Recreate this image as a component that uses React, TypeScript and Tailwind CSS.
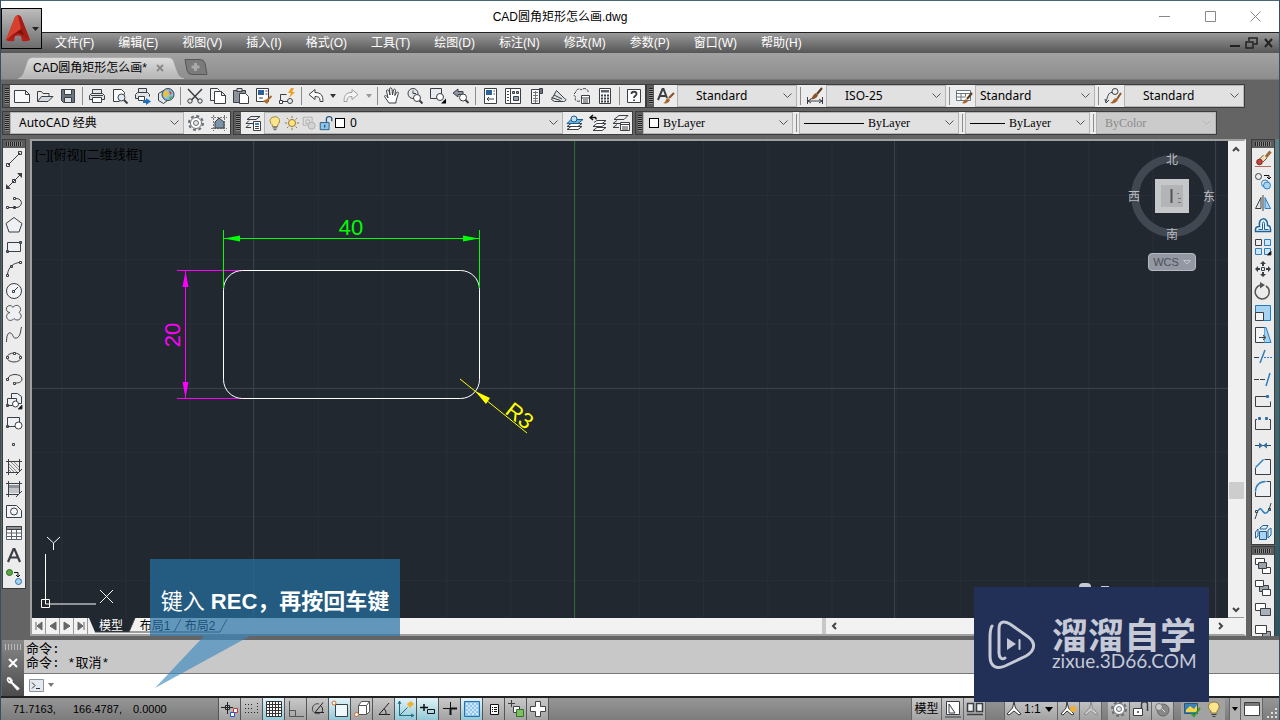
import type { ReactNode } from "react";

const ink = "#3a3f45";
const blue = "#2f6fa8";
const sky = "#a9d3f2";

/* All toolbar glyphs are drawn on an 18 x 18 board */
const glyphs: Record<string, ReactNode> = {
  new: <path d="M1.5 3.5h11l4 4v8h-15zM12.5 3.5v4h4" fill="#f8f9fa" />,
  open: (
    <>
      <path d="M1.5 14.5v-10h4l1.5 2h6v3" />
      <path d="M1.5 14.5l4-5h11.5l-5 5z" fill="#d5dade" />
    </>
  ),
  save: (
    <>
      <path d="M2.5 2.5h13v13h-11l-2-2z" fill="#6a7480" />
      <path d="M5.5 2.5h7v5h-7z" fill="#f4f4f4" />
      <path d="M5.5 10.5h7v5h-7z" fill="#dfe3e6" />
    </>
  ),
  print: (
    <>
      <path d="M4.5 6.5v-4h9v4M4.5 12.5h-3v-4l2-2h11l2 2v4h-3" fill="#dfe3e6" />
      <path d="M4.5 10.5h9v5h-9z" fill="#fff" />
      <path d="M3 8.5h12" />
    </>
  ),
  preview: (
    <>
      <path d="M8.5 14.5h-6v-12h8l3 3v2" fill="#f8f9fa" />
      <circle cx="10.5" cy="10.5" r="3.5" fill="#dfeaf2" />
      <path d="M13 13l3.5 3.5" strokeWidth="2" />
    </>
  ),
  publish: (
    <>
      <path d="M4.5 5.5v-4h8v4M4.5 11.5h-3v-4l2-2h10l2 2v2" fill="#dfe3e6" />
      <path d="M4.5 9.5h6v4h-6z" fill="#fff" />
      <path d="M9 13h3v-2l5 3.5-5 3.5v-2h-3z" fill="#1f6fc0" stroke="none" />
    </>
  ),
  globe: (
    <>
      <path d="M1.5 6.5l5-3 4 2v8l-4 3-5-3z" fill="#e2e6ea" />
      <circle cx="11" cy="7.5" r="6" fill="#7ec0ea" />
      <path d="M8 3l3 1 1 4-3 3-3-3z" fill="#e9c33c" stroke="none" />
      <path d="M12 3l3 3-2 2z" fill="#d9483b" stroke="none" />
      <path d="M12 10l4-1-3 4z" fill="#58a949" stroke="none" />
    </>
  ),
  cut: (
    <>
      <path d="M2 2l10.5 11M16 2L5.5 13" strokeWidth="1.5" />
      <circle cx="4" cy="14" r="2.2" />
      <circle cx="14" cy="14" r="2.2" />
    </>
  ),
  copy: (
    <>
      <path d="M5.5 13.5h-4v-12h7l2 2" fill="#f4f4f4" />
      <path d="M5.5 4.5h7l4 4v8h-11zM12.5 4.5v4h4" fill="#fff" />
    </>
  ),
  paste: (
    <>
      <path d="M1.5 3.5h12v12h-12z" fill="#8b9299" />
      <path d="M5 1.5h5v3h-5z" fill="#d5d8da" />
      <path d="M7.5 6.5h6l3 3v7h-9z" fill="#fff" />
    </>
  ),
  match: (
    <>
      <path d="M1.5 1.5h12v13h-12z" fill="#fff" />
      <path d="M3 3h6v5h-6z" fill="#2a639b" stroke="none" />
      <path d="M10.5 4h2M10.5 7h2M4 11h4" />
      <path d="M16.5 9l-4 4" stroke="#a86b2e" strokeWidth="2" />
      <path d="M8 14l4-2 2 2-2 3z" fill="#b06a28" stroke="none" />
    </>
  ),
  block: (
    <>
      <path d="M2.5 7.5h6M2.5 7.5v7h7" />
      <circle cx="12" cy="14" r="2.5" />
      <path d="M1.5 13.5h3v3h-3z" fill="#fff" />
      <path d="M13 1l-3 5h3l-2 5 6-6h-3l2-4z" fill="#f0a020" stroke="none" />
    </>
  ),
  undo: <path d="M2 7.5l6-5v3c6 0 8 3 8 9h-3c0-4-1-5-5-5v3z" fill="#fafafa" />,
  redo: <path d="M16 7.5l-6-5v3c-6 0-8 3-8 9h3c0-4 1-5 5-5v3z" fill="#f6f6f6" stroke="#9a9ea2" />,
  pan: (
    <path
      d="M6 16L1.5 9.5c0-1.5 2-1 3 .5l.5 1-1.5-7c0-1.5 2-1.5 2.5 0l1 4-.5-6c0-1.5 2-1.5 2.5 0l.5 6 1-5c.5-1.5 2.2-1 2 .5l-.7 5 1.7-3c1-1 2.200-.3 1.800 1L13 14v2z"
      fill="#fff"
    />
  ),
  zoomrt: (
    <>
      <circle cx="7" cy="6.5" r="5" fill="#e4e8ec" />
      <path d="M7 3.5v3h3" />
      <circle cx="11" cy="11" r="3.5" fill="#fff" />
      <path d="M13.5 13.5l3 3" strokeWidth="2" />
    </>
  ),
  zoomwin: (
    <>
      <path d="M1.5 1.5h11v10h-11z" fill="#e9ecef" />
      <circle cx="11" cy="10" r="3.5" fill="#fff" />
      <path d="M12 16.500h5v-5z" fill="#000" stroke="none" />
    </>
  ),
  zoomprev: (
    <>
      <path d="M1 6l5-4v2.5h5v3H6V10z" fill="#8d949b" />
      <circle cx="11" cy="10.5" r="3.5" fill="#fff" />
      <path d="M13.5 13l3 3" strokeWidth="2" />
    </>
  ),
  props: (
    <>
      <path d="M3.5 1.5h12v15h-12z" fill="#fff" />
      <path d="M5 3h6v5H5z" fill="#2a639b" stroke="none" />
      <path d="M12.5 4h1.5M12.5 7h1.5M6 12h7M8 10l-2 2 2 2" />
    </>
  ),
  center: (
    <>
      <path d="M1.5 1.5h15v15h-15zM6.5 1.5v15" fill="#fff" />
      <path d="M3 4.5h2M3 7.5h2M3 10.5h2M3 13.5h2" />
      <path d="M8.5 4.5h2v2h-2zM12.5 4.5h2v2h-2zM9.5 9.5h5v4h-5z" fill="#8fa3b5" />
    </>
  ),
  palette: (
    <>
      <path d="M4.5 2.5h8v14h-8z" fill="#fff" />
      <path d="M12.5 1.5h3v5h-3z" fill="#6a7480" />
      <path d="M6 5.5h5M6 8.5h5M6 11.5h5M6 14h5M8.5 4v12" stroke="#777" />
    </>
  ),
  sheets: (
    <>
      <path d="M1.5 12.5l5-9 8 8c2 0 2 3-1 3h-9z" fill="#dde1e4" />
      <path d="M1.5 10.5l9 3M4 8l8 4" />
    </>
  ),
  markup: (
    <>
      <path d="M7 14c-4 1-6-1-4-4-3-1-2-4 0-5 0-3 4-4 5-2 3-3 8-1 7 3" strokeDasharray="3 1" />
      <path d="M8.5 8.5h8v8h-8zM8.5 11h8M10 13h5M10 15h5" fill="#fff" />
    </>
  ),
  calc: (
    <>
      <path d="M3.5 1.5h11v15h-11z" fill="#fff" />
      <path d="M5 3h8v2.5H5z" fill="#59636d" stroke="none" />
      <path d="M5 8.5h8M5 11.5h8M5 14.5h8" strokeDasharray="2 1" strokeWidth="2" />
    </>
  ),
  help: (
    <>
      <path d="M2.5 2.5h13v13h-13z" fill="#fff" />
      <path d="M6.5 7c0-3 5-3 5 0 0 2-2.5 1.5-2.5 4M9 12.500v1.5" strokeWidth="1.8" />
    </>
  ),
  textstyle: (
    <>
      <path d="M1 13L5.5 2h1L10 11M3 9h6" strokeWidth="2" />
      <path d="M17 6l-5 5" stroke="#8a5428" strokeWidth="2.2" />
      <path d="M6 16c3 0 2-4 5-5l2 2c-1 3-4 4-7 3z" fill="#a8652e" stroke="none" />
    </>
  ),
  dimstyle: (
    <>
      <path d="M1.500 10v7M16.5 10v7M2 14h14M5 12l-3 2 3 2M13 12l3 2-3 2" />
      <path d="M16 1l-5 6" stroke="#5b3a20" strokeWidth="2" />
      <path d="M4 12c3-1 2-4 6-6l2 2c-1 3-4 5-8 4z" fill="#8a5428" stroke="none" />
    </>
  ),
  tablestyle: (
    <>
      <path d="M1.5 3.5h14v10h-14zM1.5 6.5h14M1.5 10h9M6 6.5v7M10.5 6.5v3" fill="#fff" stroke="#6a7480" />
      <path d="M17 6l-5 6" stroke="#5b3a20" strokeWidth="2" />
      <path d="M7 16c2-1 2-3 4-4l2 2c-1 2-4 3-6 2z" fill="#a8652e" stroke="none" />
    </>
  ),
  leader: (
    <>
      <circle cx="11" cy="4.5" r="3" />
      <path d="M8 5.5c-4 0-4 4-6 9M1 12l1 4 3-3" />
      <path d="M17 6l-4 6" stroke="#8a5428" strokeWidth="2" />
      <path d="M6 16c3-1 3-4 6-5l2 2c-2 3-5 4-8 3z" fill="#a8652e" stroke="none" />
    </>
  ),
  gear: (
    <>
      <circle cx="9" cy="9" r="7" strokeDasharray="3 2.5" strokeWidth="2" stroke="#6a7076" />
      <circle cx="9" cy="9" r="5.5" fill="#fff" stroke="#6a7076" />
      <circle cx="9" cy="9" r="2.5" fill="#e6e6e6" stroke="#6a7076" />
    </>
  ),
  house: (
    <>
      <path d="M1 3.5h16M1 14.5h16M3.5 1v16M14.5 1v16" stroke="#777" strokeDasharray="2 1" />
      <path d="M5 14V8l4-4 5 4v6z" fill="#7d93a8" />
    </>
  ),
  layers: (
    <>
      <path d="M3 5.5l4-3h9l-4 3zM2 9.5l3-3M2 9.5h7M2 13.5l3-3M2 13.5h5" />
      <path d="M9.5 7.5h7v9h-7zM11 12.5h4M11 14.5h4" fill="#fff" />
      <path d="M11 9h4v2h-4z" fill="#3e83c0" stroke="none" />
    </>
  ),
  bulb: (
    <>
      <path d="M6 11c-5-4-2-9 3-9s7 5 3 9v2H6z" fill="#ffe58a" stroke="#8a7a3c" />
      <path d="M6.5 14.5h5M7.5 16.5h3" />
    </>
  ),
  sun: (
    <>
      <circle cx="9" cy="9" r="4" fill="#ffe07a" stroke="#8a7030" />
      <path d="M9 1v2.5M9 14.5V17M1 9h2.5M14.5 9H17M3.3 3.3L5 5M13 13l1.7 1.7M14.7 3.3L13 5M5 13l-1.7 1.7" stroke="#8a7030" />
    </>
  ),
  vpfreeze: (
    <>
      <path d="M2.5 2.5h10v5M2.5 2.5v9h5M5.5 5.5h4v4h-4z" stroke="#aaa" />
      <circle cx="12" cy="12" r="4" fill="#d3d3d3" stroke="#aaa" />
    </>
  ),
  unlock: (
    <>
      <path d="M2.5 8.5h10v8h-10z" fill="#8ec5ea" stroke="#24577f" />
      <path d="M9.5 8V4c0-3 6-3 6 0v3M7.500 11v3" stroke="#24577f" strokeWidth="1.5" />
    </>
  ),
  stackA: (
    <>
      <path d="M1 15.5l4-3h11l-4 3zM1 12.5l4-3h11l-4 3z" fill="#fff" />
      <path d="M1 9.5l4-4h12l-5 4z" fill="#6cb6e4" stroke="#1f5c8c" />
      <circle cx="8" cy="5" r="3" fill="#bfe0f5" stroke="#1f5c8c" />
    </>
  ),
  stackB: (
    <>
      <path d="M4 16.5l4-3h9l-4 3zM4 12.5l4-3h9l-4 3zM5 8.5l3-2h9l-4 3" fill="#fff" />
      <path d="M1 3.5h6M4 1L1 3.5 4 6M7 3.5v2" stroke="#111" strokeWidth="1.4" />
    </>
  ),
  stackC: (
    <>
      <path d="M2 5.5l5-4h9l-4 4zM1 9.5l4-3M1 9.5h7M1 13.5l4-3M1 13.5h6" />
      <path d="M8.5 8.5h9v8h-9zM8.5 10.5h9M10 13h6M10 15h6" fill="#fff" />
    </>
  ),
  line: <path d="M3 15L15 3M1.5 13.5h3v3h-3zM13.5 1.5h3v3h-3z" />,
  xline: (
    <>
      <path d="M2 16L16 2M7.5 7.5h3v3h-3z" />
      <path d="M1 17v-5l5 5zM17 1v5l-5-5z" fill={ink} stroke="none" />
    </>
  ),
  pline: <path d="M4 13.500h8c6-1 6-9-1-9M1.500 12.500h2v2h-2zM8.500 12.500h2v2h-2zM8.500 3.500h2v2h-2z" fill="none" />,
  polygon: <path d="M9 1.5l8 6-3 8.5H4L1 7.5z" fill="#eef1f3" />,
  rect: <path d="M2.5 4.5h13v9h-13zM1.5 12.5h2v2h-2zM14.5 3.5h2v2h-2z" fill="#eef1f3" />,
  arc: <path d="M2.5 14c1-7 6-11 12-11.500M1.500 14.500h2v2h-2zM5.500 5.500h2v2h-2zM14.500 1.500h2v2h-2z" />,
  circle: (
    <>
      <circle cx="9" cy="9" r="7.5" fill="#f2f4f5" />
      <path d="M9 9l4-4M7.5 8.5h2v2h-2z" />
    </>
  ),
  cloud: (
    <path
      d="M8 3.500a4 4 0 1 1 6 5a4 4 0 1 1-5 6a4 4 0 1 1-4-6a3.500 3.500 0 1 1 3-5z"
      fill="#eef1f3"
      stroke="#555"
    />
  ),
  spline: <path d="M1.500 16c0-5 1-10 4-9s2 6 6 5 4-7 5-11" />,
  ellipse: (
    <>
      <ellipse cx="9" cy="9.500" rx="7" ry="4.500" />
      <path d="M1.500 8.500h2v2h-2zM14.500 8.500h2v2h-2zM8.500 4.500h2v2h-2z" fill="#fff" />
    </>
  ),
  earc: <path d="M3 9c0-6 14-6 14 0 0 3-3 4-6 4M1.500 8.500h2v2h-2zM8.500 12.500h2v2h-2z" />,
  insert: (
    <>
      <path d="M6.5 6V1.5h6l4 3v7h-4M2.5 13.5v-7h9v7zM1.500 12.5h2v2h-2z" fill="#eef1f3" />
      <circle cx="10.5" cy="12" r="3" fill="#fff" />
      <path d="M17 17h-4l4-4z" fill="#000" />
    </>
  ),
  makeblock: (
    <>
      <path d="M2.5 12.5v-9h12v9zM1.500 11.5h2v2h-2z" fill="#eef1f3" />
      <circle cx="13.5" cy="11.5" r="3.5" fill="#fff" />
    </>
  ),
  point: <path d="M7.5 7.5h2v2h-2z" />,
  hatch: (
    <>
      <path d="M4 6l8 8M4 9l5 5M4 12l2 2M6 4l8 8M9 4l5 5" stroke="#888" />
      <path d="M1 3.5h16M1 14.5h12M3.5 1v16M14.5 1v12M17 11l-6 6" />
    </>
  ),
  gradient: (
    <>
      <path d="M4 5h10v3H4z" fill="#8d9399" stroke="none" />
      <path d="M4 8h10v5H4z" fill="#c2c6ca" stroke="none" />
      <path d="M1 3.5h16M1 14.5h12M3.5 1v16M14.5 1v12M17 11l-6 6" />
    </>
  ),
  region: (
    <>
      <path d="M1.5 15.5v-12h10l5 5v7z" fill="#f2f4f5" />
      <circle cx="9" cy="9.5" r="3.5" />
    </>
  ),
  table: (
    <>
      <path d="M1.5 2.5h15v13h-15zM1.5 9h15M1.5 12.5h15M6.5 5v10.5M11.5 5v10.5" fill="#fff" stroke="#5c636a" />
      <path d="M1.5 2.5h15v3h-15z" fill="#8d9399" />
    </>
  ),
  text: <path d="M3 16L8.5 3h1L15 16M5 11.5h8" strokeWidth="2.2" />,
  addsel: (
    <>
      <circle cx="4.5" cy="4.5" r="3" fill="#5aa93f" stroke="#2c6b1c" />
      <circle cx="13.5" cy="13.5" r="3" fill="#a6d4f5" stroke={blue} />
      <path d="M9 4.5h4v4M11 7l2 2 2-2" stroke="#111" />
    </>
  ),
  erase: (
    <>
      <path d="M16.500 1.500l-5 6" stroke="#9a6a35" strokeWidth="3" />
      <path d="M11.500 6.500l-4 4" stroke="#f0dfb4" strokeWidth="5" />
      <path d="M13 8l-4 4M9.500 5l-4 4" stroke="#6b5532" />
      <circle cx="5.5" cy="12" r="2.8" fill="#c8423c" stroke="#7d2723" />
      <path d="M1 16.500h16" stroke="#b56a5e" />
    </>
  ),
  copyobj: (
    <>
      <circle cx="4.5" cy="4.5" r="3" />
      <path d="M10 3.5h5v3M13 5l2 2 2-2" stroke="#111" />
      <circle cx="11" cy="11.5" r="3.5" stroke="#2c7fc0" />
      <circle cx="13" cy="13.5" r="3.5" stroke="#2c7fc0" fill={sky} />
    </>
  ),
  mirror: (
    <>
      <path d="M7 3.5v11H1.5z" fill="#e4e6e8" />
      <path d="M11 3.5v11h5.5z" fill={sky} stroke="#2c7fc0" />
      <path d="M9 1v16" />
    </>
  ),
  offset: (
    <>
      <path d="M1.500 15.500v-2c0-3 2-3 4-3-2-10 9-10 8-1 2 0 3 1 3 4v2z" fill="#e4f1fb" stroke="#1f6096" strokeWidth="1.5" />
      <path d="M4.500 13.500h4v-6c0-2 2-2 2 0v6h4" stroke="#1f6096" />
    </>
  ),
  array: (
    <>
      <path d="M1.5 1.5h6v6h-6z" />
      <path d="M10.5 1.5h6v6h-6zM1.5 10.5h6v6h-6zM10.5 10.5h6v6h-6z" fill="#cfe6f8" stroke="#2c7fc0" />
      <path d="M17 17h-4l4-4z" fill="#000" />
    </>
  ),
  move: (
    <>
      <path d="M7.5 7.5h3v3h-3z" />
      <path d="M9 1l3 3H6zM9 17l3-3H6zM1 9l3-3v6zM17 9l-3-3v6zM8 4h2v2H8zM8 12h2v2H8zM4 8h2v2H4zM12 8h2v2h-2z" fill={ink} stroke="none" />
    </>
  ),
  rotate: (
    <>
      <path d="M12 4a7 7 0 1 1-5-1" stroke="#555" strokeWidth="1.5" />
      <path d="M6 0l5 3-5 3.5z" fill="#555" stroke="none" />
    </>
  ),
  scale: (
    <>
      <path d="M1.5 1.5h15v15h-15z" fill={sky} stroke="#1f7cc0" />
      <path d="M1.5 8.5h8v8h-8z" fill="#f4f4f4" />
    </>
  ),
  stretch: (
    <>
      <path d="M10 1.5h2l5 15h-7z" fill={sky} stroke="#1f7cc0" />
      <path d="M10 1.5H1.5v15H10M5 11.5h6M9 9l3 2.5L9 14" fill="#f4f4f4" />
    </>
  ),
  trim: (
    <>
      <path d="M0 9.5h5" />
      <path d="M6 15l5-13" stroke="#2c7fc0" strokeWidth="1.5" />
      <path d="M10 9.5h8" stroke="#2c7fc0" strokeDasharray="2 1" />
    </>
  ),
  extend: (
    <>
      <path d="M0 9.5h5M6 9.5h5" />
      <path d="M12 16l4-13" stroke="#2c7fc0" strokeWidth="1.5" />
    </>
  ),
  breakpt: (
    <>
      <path d="M12 4.5H1.5v10h15v-5" />
      <path d="M12.500 3.500h2v2h-2z" fill={blue} stroke={blue} />
    </>
  ),
  breaktwo: (
    <>
      <path d="M3 5.5H1.5v10h15v-10H15" />
      <path d="M4.500 3.500h2v2h-2zM11.500 3.500h2v2h-2z" fill={blue} stroke={blue} />
    </>
  ),
  join: (
    <>
      <path d="M1 9.5h16" />
      <path d="M5 6.500l4 3-4 3zM13 6.500l-4 3 4 3z" fill={blue} stroke="none" />
    </>
  ),
  chamfer: (
    <>
      <path d="M10.5 1.5h6v15h-15V10" fill="#eef1f3" />
      <path d="M1.5 9.5l8-8" stroke="#2c7fc0" strokeWidth="1.5" />
    </>
  ),
  fillet: (
    <>
      <path d="M12.5 1.5h4v15h-15V12" fill="#eef1f3" />
      <path d="M1.5 11.5c0-6 4-10 10-10" stroke="#2c7fc0" strokeWidth="1.5" />
    </>
  ),
  blend: (
    <>
      <path d="M1 17c1-3 2-5 2-7M15 8l2-7M1.5 8.500h2v2h-2zM14.500 6.500h2v2h-2z" />
      <path d="M4 9c4-8 5 9 11-1" stroke="#2c7fc0" strokeWidth="1.5" />
    </>
  ),
  explode: (
    <>
      <path d="M5.5 7.5h7v8h-7z" fill={sky} stroke="#1f6096" />
      <path d="M4 5l-2.500 3v6L4 12zM6 4l3-2.500h5L12 5H6zM14 6l3-2v7l-3 3z" fill="#e4f1fb" stroke="#1f6096" />
    </>
  ),
  order1: (
    <>
      <path d="M1.5 1.5h9v6h-9zM8.5 10.5h8v6h-8z" fill="#fff" />
      <path d="M4.5 5.5h8v6h-8z" fill="#9aa2a9" />
    </>
  ),
  order2: (
    <>
      <path d="M5.5 6.5h9v6h-9z" fill="#9aa2a9" />
      <path d="M1.5 1.5h8v6h-8zM8.5 10.5h8v6h-8z" fill="#fff" />
    </>
  ),
  order3: (
    <>
      <path d="M1.5 2.5h10v7h-10z" fill="#fff" />
      <path d="M6.5 7.5h10v7h-10z" fill="#aab1b8" />
    </>
  ),
  order4: (
    <>
      <path d="M8.5 8.5h8v7h-8z" fill="#9aa2a9" />
      <path d="M1.5 2.5h11v8h-11z" fill="#fff" />
    </>
  ),
  infer: (
    <>
      <path d="M0 7.500h12M6.500 2v12M4.500 5.500h4v4h-4z" stroke="#222" />
      <path d="M12.500 8.500h4v4h-4z" stroke="#c33" fill="#fff" />
      <path d="M9.500 12.500h4v4h-4z" stroke="#25c" fill="#fff" />
    </>
  ),
  snap: <path d="M2 4.500h9M2 8.500h9M2 12.500h11M14.500 3v10" stroke="#222" strokeDasharray="1 2" />,
  grid: (
    <path
      d="M1.5 1.5h15v15h-15zM4.5 1.5v15M7.5 1.5v15M10.5 1.5v15M13.5 1.5v15M1.5 4.5h15M1.5 7.5h15M1.5 10.5h15M1.5 13.5h15"
      fill="#fff"
      stroke="#333"
    />
  ),
  ortho: <path d="M2.5 1v15.5H17M2.5 10.5h6v6" stroke="#555" />,
  polar: (
    <>
      <path d="M15 12.5H6l8-10M12 6c2 2 2 4 1 6" stroke="#222" />
      <path d="M10 4a5 5 0 1 0 1 9" stroke="#444" />
    </>
  ),
  osnap: (
    <>
      <path d="M4.5 4.5h12v12h-12z" fill="#eef7fb" />
      <circle cx="3" cy="3" r="2" fill="#fff" stroke="#d9662c" />
    </>
  ),
  osnap3: (
    <>
      <path d="M5.5 5.5l3-4h8v10l-3 3h-8zM5.5 5.5h8v9M13.5 5.5l3-4" fill="#fff" stroke="#555" />
      <circle cx="3.5" cy="14.5" r="2" fill="#fff" stroke="#d9662c" />
    </>
  ),
  otrack: <path d="M14 3L4 14.5h11M9 9c2 1 2 3 2 5" stroke="#222" />,
  ducs: (
    <>
      <path d="M2.5 2v13.5H16M2.5 15.5l8-8M1 4l1.5-3L4 4M14 14l3 1.5-3 1.5" stroke="#1f6c80" />
      <path d="M10 4l4-3 3 3-4 4z" fill="#f0b030" stroke="none" />
    </>
  ),
  dyn: (
    <>
      <path d="M1 7.5h8M5 4v7" stroke="#111" strokeWidth="1.5" />
      <path d="M8.5 9.5h7v4h-7z" stroke="#111" />
    </>
  ),
  lwt: (
    <>
      <path d="M2 8.500h7M9.500 2v6" stroke="#111" />
      <path d="M9.500 8v7M9 8.500h7" stroke="#111" strokeWidth="2" />
    </>
  ),
  tpy: (
    <>
      <path d="M1.5 1.5h15v15h-15z" fill="#8fc6ee" stroke="#2c6ea6" />
      <path d="M4 3v12M8 3v12M12 3v12" stroke="#d0e8fa" strokeWidth="2" strokeDasharray="2 2" />
      <path d="M6 5v10M10 5v10M14 5v10" stroke="#d0e8fa" strokeWidth="2" strokeDasharray="2 2" />
    </>
  ),
  qp: (
    <>
      <path d="M5.5 4.5h8v10h-8z" fill="#fff" stroke="#111" />
      <path d="M7 7.5h5M7 9.5h5M7 11.5h5" stroke="#111" strokeDasharray="1 1 4" />
    </>
  ),
  cycle: (
    <>
      <path d="M1 3.5h7M4.5 0v7" />
      <path d="M6.5 6.5h6v6h-6z" fill="#fff" />
      <path d="M9.5 9.5h7v7h-7z" fill="#7cc05f" stroke="#39702a" />
    </>
  ),
  plus: <path d="M6.5 1.5h5v5h5v5h-5v5h-5v-5h-5v-5h5z" fill="#fff" stroke="#444" />,
  layout: (
    <>
      <path d="M2.5 1.5h13v13h-13zM1 17h16" fill="#fff" />
      <path d="M5 4l6 9H5z" />
    </>
  ),
  views: <path d="M1.5 3.5h6v8h-6zM10.5 3.5h6v8h-6zM1 14.5h16" fill="#eee" strokeWidth="1.5" />,
  anno: <path d="M9 2l1.5 6 5.5 6-2 1-5-4-5 4-2-1 5.5-6z" fill="#fff" stroke="#333" />,
  annovis: (
    <>
      <path d="M7 2l1.5 6 5.5 6-2 1-5-4-4 4-2-1L6 8z" fill="#fff" stroke="#333" />
      <circle cx="13" cy="9" r="3" fill="#f0b030" stroke="none" />
    </>
  ),
  annoauto: (
    <>
      <path d="M9 2l1.5 6 5.5 6-2 1-5-4-5 4-2-1 5.5-6z" fill="#ccc" stroke="#888" />
      <path d="M12 2l-4 6h3l-2 5" stroke="#aaa" />
    </>
  ),
  padlock: (
    <>
      <path d="M1.5 8.5h9v7h-9z" fill="#fff" />
      <path d="M9.5 8V4c0-3 6-3 6 0v7M6 11v2" strokeWidth="1.5" />
    </>
  ),
  hardware: (
    <>
      <circle cx="9" cy="10" r="6" fill="#888" stroke="#666" />
      <circle cx="5" cy="7" r="3.5" fill="#ccc" stroke="#777" />
      <path d="M8 9l3 3" stroke="#ddd" />
    </>
  ),
  tray: (
    <>
      <path d="M1.5 3.5h13v10h-13z" fill="#3b80b8" stroke="#2a567c" />
      <path d="M3 10l4-4 4 3 3-4v7H3z" fill="#f3d548" stroke="none" />
      <path d="M8 13l3 3 6-8" stroke="#35982c" strokeWidth="2" />
    </>
  ),
  clean: (
    <>
      <path d="M1.5 2.5h15v13h-15z" fill="#fff" />
      <path d="M2 3h14v3H2z" fill="#777" stroke="none" />
    </>
  ),
  wrench: <path d="M3 2a4 4 0 0 0 4 6l7 8 2-2-8-7a4 4 0 0 0-5-5l3 3-2 2z" fill="#fff" stroke="#fff" />,
};

function Glyph({ name, className = "size-[18px]" }: { name: string; className?: string }) {
  return (
    <svg viewBox="0 0 18 18" className={`shrink-0 ${className}`} fill="none" stroke={ink} strokeWidth="1" aria-hidden="true">
      {glyphs[name]}
    </svg>
  );
}

function ToolButton({ name, className = "w-[23px] h-full" }: { name: string; className?: string }) {
  return (
    <button type="button" aria-label={name} className={`flex shrink-0 items-center justify-center hover:bg-sky-100 ${className}`}>
      <Glyph name={name} />
    </button>
  );
}

function Grip() {
  return (
    <span className="flex w-[7px] shrink-0 items-center justify-center self-stretch bg-[#5c5c5c]">
      <span className="h-4 w-1 bg-[repeating-linear-gradient(#222_0_1px,#8a8a8a_1px_2px)]" />
    </span>
  );
}

function Separator() {
  return (
    <span className="flex w-[6px] shrink-0 items-center justify-center">
      <span className="h-[18px] w-px bg-[#8c8c8c]" />
    </span>
  );
}

function Toolbar({ children }: { children: ReactNode }) {
  return <div className="flex h-6 shrink-0 items-stretch border border-[#3c3c3c] bg-[#ececec]">{children}</div>;
}

interface ComboProps {
  readonly label: string;
  readonly value: string;
  readonly className: string;
  readonly prefix?: ReactNode;
  readonly disabled?: boolean;
}

function Combo({ label, value, className, prefix, disabled }: ComboProps) {
  return (
    <span className={`flex shrink-0 items-center border border-[#b4b4b4] ${disabled ? "bg-[#cbcbcb] text-[#8a8a8a]" : "bg-[#e1e1e1] text-black"} ${className}`}>
      {prefix}
      <select aria-label={label} disabled={disabled} className="min-w-0 flex-1 appearance-none bg-transparent outline-none">
        <option>{value}</option>
      </select>
      <svg viewBox="0 0 9 6" className="mr-1 h-[6px] w-[9px] shrink-0" fill="none" stroke={disabled ? "#b4b4b4" : "#555"} aria-hidden="true">
        <path d="M.5.5l4 4 4-4" />
      </svg>
    </span>
  );
}

function DropArrow({ dim = false }: { dim?: boolean }) {
  return (
    <button type="button" aria-label="More" className="flex w-[10px] shrink-0 items-center justify-center">
      <svg viewBox="0 0 6 4" className="h-1 w-[6px]" aria-hidden="true">
        <path d="M0 0h6L3 4z" fill={dim ? "#999" : "#333"} />
      </svg>
    </button>
  );
}

const menus = ["文件(F)", "编辑(E)", "视图(V)", "插入(I)", "格式(O)", "工具(T)", "绘图(D)", "标注(N)", "修改(M)", "参数(P)", "窗口(W)", "帮助(H)"];

function Header() {
  return (
    <header className="relative shrink-0">
      <div className="flex h-8 items-center border-t border-[#4a6670] bg-white">
        <h1 className="flex-1 pl-[80px] pr-[120px] text-center text-xs text-black">CAD圆角矩形怎么画.dwg</h1>
        <div className="flex w-[120px] items-center justify-between pr-[18px] text-[#888]">
          <button type="button" aria-label="Minimize">
            <svg viewBox="0 0 11 11" className="size-[11px]" stroke="currentColor"><path d="M0 5.5h11" /></svg>
          </button>
          <button type="button" aria-label="Maximize">
            <svg viewBox="0 0 11 11" className="size-[11px]" fill="none" stroke="currentColor"><path d="M.5.5h10v10H.5z" /></svg>
          </button>
          <button type="button" aria-label="Close">
            <svg viewBox="0 0 11 11" className="size-[11px]" stroke="currentColor"><path d="M.5.5l10 10M10.5.5l-10 10" /></svg>
          </button>
        </div>
      </div>
      <nav className="flex h-[21px] items-center gap-6 border-t border-[#222] bg-linear-to-b from-[#9a9a9a] to-[#565656] pl-[54px] text-xs text-white">
        {menus.map((menu) => (
          <button key={menu} type="button" className="shrink-0 leading-5">{menu}</button>
        ))}
        <span className="ml-auto flex items-center pr-1 text-[#222]">
          <svg viewBox="0 0 46 12" className="h-3 w-[46px]" fill="none" stroke="currentColor" strokeWidth="2" role="img" aria-label="Document window controls">
            <path d="M1 9h10M36 2l7 8M43 2l-7 8" />
            <path d="M17 5h7v6h-7zM20 4V1h8v6h-3" strokeWidth="1.5" />
          </svg>
        </span>
      </nav>
      <button type="button" aria-label="Application menu" className="absolute left-0 top-2 flex h-[41px] w-[41px] items-center gap-[2px] border border-black bg-linear-to-b from-[#bdbdbd] to-[#6e6e6e] pl-1">
        <svg viewBox="0 0 24 28" className="h-7 w-6 shrink-0" aria-hidden="true">
          <path d="M0 25L9 2q3-3 6 0l9 23q-3 2-8 1l-1-5q-3-1-6 0l-1 5q-5 1-8-1z" fill="#b3201a" />
          <path d="M12 0q2 0 3 2l9 23-7-3-5-7z" fill="#a61c17" />
          <path d="M12 0l3 14-8 5-7 6L9 2q1-2 3-2z" fill="#d8402e" />
          <path d="M15 14l3 6-6-2-9 6z" fill="#7c120e" />
        </svg>
        <svg viewBox="0 0 7 4" className="h-1 w-[7px]" aria-hidden="true"><path d="M0 0h7L3.5 4z" fill="#222" /></svg>
      </button>
    </header>
  );
}

function FileTabs() {
  return (
    <div className="flex h-[27px] shrink-0 items-end border-b border-[#7a7a7a] bg-linear-to-b from-[#a2a2a2] to-[#8d8d8d] pl-[17px]">
      <div className="relative flex h-[22px] w-[166px] items-center">
        <svg viewBox="0 0 166 22" className="absolute inset-0 size-full" aria-hidden="true">
          <defs>
            <linearGradient id="tab" x2="0" y2="1">
              <stop stopColor="#dcdcdc" />
              <stop offset="1" stopColor="#b5b5b5" />
            </linearGradient>
          </defs>
          <path d="M0 22q4-1 6-6l4-12q1-3 4-3h136q4 0 5 3l4 12q2 5 7 6z" fill="url(#tab)" stroke="#d5d5d5" strokeWidth=".5" />
        </svg>
        <button type="button" className="relative pl-[15px] text-xs leading-5 text-black">CAD圆角矩形怎么画*</button>
        <button type="button" aria-label="Close tab" className="relative ml-[9px]">
          <svg viewBox="0 0 8 8" className="size-2" stroke="#8a8a8a" strokeWidth="2"><path d="M1 1l6 6M7 1L1 7" /></svg>
        </button>
      </div>
      <button type="button" aria-label="New tab" className="mb-1">
        <svg viewBox="0 0 24 16" className="h-4 w-6" fill="none" aria-hidden="true">
          <path d="M1 .5h15q4 0 5 4l2 11H8q-4 0-5-4z" fill="#7b7b7b" stroke="#555" />
          <path d="M11.5 4v8M7.5 8h8" stroke="#aaa" strokeWidth="3" />
        </svg>
      </button>
    </div>
  );
}

const standardTools = [
  ["new", "open", "save"],
  ["print", "preview", "publish", "globe"],
  ["cut", "copy", "paste", "match", "block"],
];

function Toolbars() {
  return (
    <div className="flex shrink-0 flex-col gap-[3px] bg-[#646464] py-1 pl-px">
      <div className="flex font-['Noto_Sans'] text-xs">
        <Toolbar>
          <Grip />
          {standardTools.map((group) => (
            <div key={group[0]} className="flex">
              {group.map((name) => <ToolButton key={name} name={name} />)}
              <Separator />
            </div>
          ))}
          <ToolButton name="undo" className="w-6" />
          <DropArrow />
          <ToolButton name="redo" className="w-[26px]" />
          <DropArrow dim />
          <Separator />
          {["pan", "zoomrt", "zoomwin", "zoomprev"].map((name) => <ToolButton key={name} name={name} />)}
          <Separator />
          {["props", "center", "palette", "sheets", "markup", "calc"].map((name) => <ToolButton key={name} name={name} />)}
          <Separator />
          <ToolButton name="help" />
        </Toolbar>
        <Toolbar>
          <Grip />
          <ToolButton name="textstyle" />
          <Combo label="Text style" value="Standard" className="w-[120px] pl-[18px]" />
          <Separator />
          <ToolButton name="dimstyle" />
          <Combo label="Dimension style" value="ISO-25" className="w-[120px] pl-[18px]" />
          <Separator />
          <ToolButton name="tablestyle" />
          <Combo label="Table style" value="Standard" className="w-[120px] pl-1" />
          <Separator />
          <ToolButton name="leader" />
          <Combo label="Multileader style" value="Standard" className="w-[120px] pl-[18px]" />
        </Toolbar>
      </div>
      <div className="flex gap-[2px]">
        <Toolbar>
          <Grip />
          <Combo label="Workspace" value="AutoCAD 经典" className="w-[174px] pl-2 font-['Noto_Sans','Noto_Sans_CJK_SC',sans-serif] text-xs" />
          <ToolButton name="gear" />
          <ToolButton name="house" />
        </Toolbar>
        <Toolbar>
          <Grip />
          <ToolButton name="layers" />
          <Combo
            label="Layer"
            value="0"
            className="w-[299px] gap-px pl-[2px] font-['Noto_Sans'] text-xs"
            prefix={
              <>
                {["bulb", "sun", "vpfreeze", "unlock"].map((name) => <Glyph key={name} name={name} className="size-4" />)}
                <span className="mr-1 size-[10px] border border-black bg-white" />
              </>
            }
          />
          <ToolButton name="stackA" />
          <ToolButton name="stackB" />
          <ToolButton name="stackC" />
        </Toolbar>
        <div className="flex font-['Liberation_Serif',serif] text-xs">
          <Toolbar>
            <Grip />
            <Combo
              label="Color"
              value="ByLayer"
              className="w-[150px] gap-1 pl-[5px]"
              prefix={<span className="size-[10px] border border-black bg-white" />}
            />
            <Separator />
            <Combo
              label="Linetype"
              value="ByLayer"
              className="w-[160px] gap-1 pl-1"
              prefix={<span className="h-px w-[60px] bg-black" />}
            />
            <Separator />
            <Combo
              label="Lineweight"
              value="ByLayer"
              className="w-[125px] gap-1 pl-1"
              prefix={<span className="h-px w-[35px] bg-black" />}
            />
            <Separator />
            <Combo label="Plot style" value="ByColor" className="w-[120px] pl-2" disabled />
          </Toolbar>
        </div>
      </div>
    </div>
  );
}

function SideTools({ tools, label }: { tools: readonly string[]; label: string }) {
  return (
    <div role="toolbar" aria-label={label} className="flex w-6 flex-col border border-[#3c3c3c] bg-[#ececec]">
      <span className="flex h-2 shrink-0 items-center justify-center bg-[#5c5c5c]">
        <span className="h-1 w-4 bg-[repeating-linear-gradient(90deg,#222_0_1px,#8a8a8a_1px_2px)]" />
      </span>
      {tools.map((name) => <ToolButton key={name} name={name} className="h-[22px] w-full" />)}
    </div>
  );
}

const drawTools = ["line", "xline", "pline", "polygon", "rect", "arc", "circle", "cloud", "spline", "ellipse", "earc", "insert", "makeblock", "point", "hatch", "gradient", "region", "table", "text", "addsel"];
const modifyTools = ["erase", "copyobj", "mirror", "offset", "array", "move", "rotate", "scale", "stretch", "trim", "extend", "breakpt", "breaktwo", "join", "chamfer", "fillet", "blend", "explode"];

/* Grid, axes, the rounded rectangle and its three dimensions */
function Drawing() {
  return (
    <svg className="absolute inset-0 size-full font-['Liberation_Sans',sans-serif]" fill="none" role="img" aria-label="Rounded rectangle, 40 by 20, corner radius 3">
      <defs>
        <pattern id="minor" x="29" y="54" width="64.2" height="64.2" patternUnits="userSpaceOnUse">
          <path d="M.5 0v65M0 .5h65" stroke="#272e37" />
        </pattern>
      </defs>
      <rect width="100%" height="100%" fill="url(#minor)" />
      <path d="M221.5 0v2000M862.5 0v2000M1183.5 0v2000M0 247.5h3000" stroke="#3a414a" />
      <path d="M542.5 0v2000" stroke="#2d6a38" />
      <g transform="translate(-32 -141)">
        <path d="M177 270.5h66M177 398.5h66M185.5 271v127" stroke="#f0f" />
        <path d="M185.5 271l-3 16h6zM185.5 398l-3-16h6z" fill="#f0f" />
        <text transform="translate(180 335) rotate(-90)" fontSize="22" textAnchor="middle" fill="#f0f">20</text>
        <rect x="223.5" y="270.5" width="256" height="128" rx="19" stroke="#fff" />
        <path d="M223.5 230v58M479.5 230v58M224 238.5h255" stroke="#0f0" />
        <path d="M224 238.5l16-3v6zM479 238.5l-16-3v6z" fill="#0f0" />
        <text x="351" y="235" fontSize="22" textAnchor="middle" fill="#0f0">40</text>
        <path d="M460 379l67 54" stroke="#ff0" />
        <path d="M475 391l15 7-4 6z" fill="#ff0" />
        <text transform="translate(504 413) rotate(38)" fontSize="22" fill="#ff0">R3</text>
        <g stroke="#fff">
          <path d="M45.5 554v50H96M41.5 599.5h8v8h-8z" />
          <path d="M100 590l13 13M113 590l-13 13M47 537l6.5 6 6.5-6M53.5 543v7" />
        </g>
      </g>
    </svg>
  );
}

function ViewCube() {
  return (
    <div className="absolute right-[9px] top-1 flex w-[94px] flex-col items-center gap-2 text-xs text-[#b9bcc0]">
      <svg viewBox="0 -6 94 100" className="h-[100px] w-[94px] font-['Noto_Sans_CJK_SC',sans-serif]" role="img" aria-label="View cube">
        <circle cx="47" cy="45" r="37" fill="none" stroke="#414851" strokeWidth="8" />
        <rect x="30" y="28" width="34" height="34" fill="#c6c7c8" />
        <rect x="36" y="34" width="22" height="22" fill="#b2b4b6" />
        <path d="M46.5 38v14" stroke="#555" strokeWidth="2" />
        <path d="M52 42.5h2M53 47.5h3M53 51.5h3" stroke="#777" />
        <g fontSize="12" fill="currentColor" textAnchor="middle">
          <text x="47" y="13">北</text>
          <text x="47" y="88">南</text>
          <text x="9" y="50">西</text>
          <text x="84" y="50">东</text>
        </g>
      </svg>
      <button type="button" className="flex h-[18px] w-12 items-center justify-center gap-1 rounded-sm border border-[#b6b8c2] bg-[#9498a5] text-[11px] text-[#4d5058]">
        WCS
        <svg viewBox="0 0 8 5" className="h-[5px] w-2" fill="none" stroke="#c0c2ca" aria-hidden="true"><path d="M.5.5h7L4 4z" /></svg>
      </button>
    </div>
  );
}

function Chevron({ d, label }: { d: string; label: string }) {
  return (
    <button type="button" aria-label={label} className="flex size-4 shrink-0 items-center justify-center">
      <svg viewBox="0 0 8 8" className="size-2" fill="none" stroke="#444" strokeWidth="2"><path d={d} /></svg>
    </button>
  );
}

function LayoutTabs() {
  return (
    <div className="flex h-4 shrink-0 items-center bg-[#f2f2f2] text-xs text-black">
      <div className="flex">
        {["M4 2v8M10 2L5 6l5 4z", "M10 2L4 6l6 4z", "M4 2l6 4-6 4z", "M4 2l5 4-5 4zM10 2v8"].map((d) => (
          <button key={d} type="button" aria-label="Scroll tabs" className="h-4 w-[14px] border-r border-[#999]">
            <svg viewBox="0 0 14 12" className="h-3 w-[14px]" fill="#666" stroke="#666"><path d={d} /></svg>
          </button>
        ))}
      </div>
      <div className="relative h-4 w-[140px]">
        <svg viewBox="0 0 140 16" className="absolute inset-0 h-4 w-[140px]" fill="none" aria-hidden="true">
          <path d="M1 0h46l-6 14H7z" fill="#212830" />
          <path d="M47 0l-6 14H7M93 1l-7 13H41M139 1l-7 13H86" stroke="#444" />
        </svg>
        <div className="relative flex h-4 items-center leading-4">
          <button type="button" className="w-[46px] text-center text-white">模型</button>
          <button type="button" className="w-[42px] text-center">布局1</button>
          <button type="button" className="w-12 text-center">布局2</button>
        </div>
      </div>
      <span className="flex-1" />
      <div className="flex w-[406px] items-center justify-between border-l-4 border-[#c8c8c8]">
        <Chevron d="M6 1L3 4l3 3" label="Scroll left" />
        <Chevron d="M3 1l3 3-3 3" label="Scroll right" />
      </div>
      <span className="w-4" />
    </div>
  );
}

function Workspace() {
  return (
    <main className="flex min-h-0 flex-1 bg-[#646464] pl-px">
      <div className="shrink-0">
        <SideTools tools={drawTools} label="Draw" />
      </div>
      <section className="ml-1 flex min-w-0 flex-1 flex-col border-2 border-[#a0a0a0] border-r-[#f0f0f0]">
        <div className="flex min-h-0 flex-1">
          <div className="relative min-w-0 flex-1 overflow-hidden bg-[#212830]">
            <Drawing />
            <p className="absolute left-[3px] top-1 text-[13px] leading-5 text-black">[−][俯视][二维线框]</p>
            <ViewCube />
          </div>
          <div className="flex w-4 flex-col items-center justify-between border-b border-[#999] bg-[#f0f0f0]">
            <Chevron d="M1 6l3-3 3 3" label="Scroll up" />
            <span className="flex-1" />
            <span className="mb-[102px] h-[17px] w-[15px] bg-[#cdcdcd]" />
            <Chevron d="M1 3l3 3 3-3" label="Scroll down" />
          </div>
        </div>
        <LayoutTabs />
      </section>
      <div className="ml-[5px] flex flex-col gap-px overflow-hidden">
        <SideTools tools={modifyTools} label="Modify" />
        <SideTools tools={["order1", "order2", "order3", "order4"]} label="Draw order" />
      </div>
      <span className="w-1 bg-linear-to-b from-[#5f7f84] to-[#2d5560]" />
    </main>
  );
}

function CommandLine() {
  return (
    <section className="mt-1 flex h-14 shrink-0 pl-px" aria-label="Command line">
      <div className="flex w-[22px] flex-col items-center justify-between bg-linear-to-b from-[#888] to-[#4c4c4c] py-1">
        <span className="h-[6px] w-4 bg-[repeating-linear-gradient(90deg,#bbb_0_1px,transparent_1px_3px)]" />
        <button type="button" aria-label="Close command line">
          <svg viewBox="0 0 10 10" className="size-[10px]" stroke="#fff" strokeWidth="2"><path d="M1 1l8 8M9 1L1 9" /></svg>
        </button>
        <button type="button" aria-label="Customize"><Glyph name="wrench" className="size-4" /></button>
      </div>
      <div className="flex min-w-0 flex-1 flex-col">
        <div className="flex-1 border-b border-[#777] bg-[#c8c8c8] pl-[2px] pt-[3px] font-['Liberation_Mono','Noto_Sans_CJK_SC',monospace] text-[13px] leading-[14px] text-black">
          <p>命令:</p>
          <p>命令: *取消*</p>
        </div>
        <label className="flex h-[22px] items-center gap-1 bg-white pl-[5px]">
          <svg viewBox="0 0 15 13" className="h-[13px] w-[15px]" fill="#e4e9ee" stroke="#8a93a0" aria-hidden="true">
            <path d="M.5.5h14v12H.5z" />
            <path d="M3 3.5l3 3-3 3M7 9.5h4" fill="none" stroke="#333" />
          </svg>
          <svg viewBox="0 0 6 4" className="h-1 w-[6px]" fill="#777" aria-hidden="true"><path d="M0 0h6L3 4z" /></svg>
          <input aria-label="Command" className="min-w-0 flex-1 text-xs outline-none" />
        </label>
      </div>
    </section>
  );
}

const toggles = ["infer", "snap", "grid", "ortho", "polar", "osnap", "osnap3", "otrack", "ducs", "dyn", "lwt", "tpy", "qp", "cycle", "plus"];
const activeToggles = ["grid", "osnap", "ducs", "dyn", "tpy"];

function StatusBar() {
  return (
    <footer className="flex h-6 shrink-0 items-stretch border-t-2 border-[#222] bg-linear-to-b from-[#969696] to-[#7c7c7c] text-xs text-black">
      <div className="flex w-[217px] shrink-0 items-center pl-3 text-[11px]">
        <span className="w-[60px]">71.7163,</span>
        <span className="w-[60px]">166.4787,</span>
        <span>0.0000</span>
      </div>
      <div className="flex border-l border-[#555]">
        {toggles.map((name) => (
          <button
            key={name}
            type="button"
            aria-label={name}
            aria-pressed={activeToggles.includes(name)}
            className={`flex w-[22px] items-center justify-center border-r border-[#555] ${
              activeToggles.includes(name)
                ? "bg-linear-to-b from-[#e3f3f8] to-[#8fc9d6]"
                : "bg-linear-to-b from-[#c9c9c9] to-[#a2a2a2]"
            }`}
          >
            <Glyph name={name} />
          </button>
        ))}
      </div>
      <span className="flex-1" />
      <div className="flex bg-linear-to-b from-[#c9c9c9] to-[#a2a2a2]">
        <button type="button" className="w-[31px] border-x border-[#666]">模型</button>
        <ToolButton name="layout" className="w-[22px] border-r border-[#666]" />
        <ToolButton name="views" className="w-[22px] border-r border-[#666]" />
      </div>
      <div className="ml-[18px] flex items-center bg-linear-to-b from-[#c9c9c9] to-[#a2a2a2]">
        <button type="button" className="flex h-full w-[54px] items-center border-x border-[#666]">
          <Glyph name="anno" />
          <span className="ml-px">1:1</span>
          <svg viewBox="0 0 8 5" className="ml-1 h-[5px] w-2" aria-hidden="true"><path d="M0 0h8L4 5z" /></svg>
        </button>
        <ToolButton name="annovis" className="h-full w-[22px] border-r border-[#666]" />
        <ToolButton name="annoauto" className="h-full w-[22px] border-r border-[#666]" />
      </div>
      <div className="ml-[6px] flex bg-linear-to-b from-[#c9c9c9] to-[#a2a2a2]">
        {["gear", "padlock", "hardware"].map((name) => <ToolButton key={name} name={name} className="w-[22px] border-r border-[#666]" />)}
      </div>
      <div className="ml-[7px] flex bg-[#a2a2a2]">
        <ToolButton name="tray" className="w-[22px]" />
        <ToolButton name="bulb" className="w-[22px]" />
      </div>
      <div className="ml-1 flex items-center bg-[#b2b2b2]">
        <button type="button" aria-label="Status menu" className="flex h-full w-3 items-center justify-center border-x border-[#666]">
          <svg viewBox="0 0 6 4" className="h-1 w-[6px]" aria-hidden="true"><path d="M0 0h6L3 4z" /></svg>
        </button>
        <ToolButton name="clean" className="h-full w-[22px] border-r border-[#666]" />
      </div>
      <svg viewBox="0 0 14 14" className="ml-[2px] size-[14px] shrink-0 self-end" fill="none" stroke="#ddd" strokeWidth="2" strokeDasharray="2 2" aria-hidden="true">
        <path d="M11 2v12M7 6v8M3 10v4" />
      </svg>
    </footer>
  );
}

function Callout() {
  return (
    <aside lang="zh-CN" className="absolute bottom-[32px] left-[149px] w-[250px] text-white">
      <p className="flex h-[77px] items-center justify-center bg-[#2570a4]/70 pt-2 text-[22px]">
        <span>键入 <b className="font-bold">REC，再按回车键</b></span>
      </p>
      <svg viewBox="0 0 250 52" className="h-[52px] w-full" aria-hidden="true">
        <path d="M54 0h46L5 52z" fill="#3a88be" fillOpacity=".65" />
      </svg>
    </aside>
  );
}

function Brand() {
  return (
    <aside lang="zh-CN" className="absolute bottom-[18px] right-[70px] flex h-[115px] w-[235px] items-center gap-4 bg-[#222f56] pl-[14px] text-[#c5cad6]">
      <span className="absolute -top-1 left-[105px] h-1 w-3 rounded-t-full bg-[#c5cad6]" />
      <span className="absolute -top-px left-[127px] h-px w-2 bg-[#c5cad6]" />
      <svg viewBox="0 0 48 50" className="h-[50px] w-12 shrink-0" fill="none" stroke="currentColor" strokeWidth="3" strokeLinecap="round" aria-hidden="true">
        <path d="M4 6c-2 3-2 6-2 12v18c0 10 6 14 15 10l21-10c10-6 10-14 1-20L22 4c-7-4-11-2-11 5v24c0 5 3 7 6 5" />
        <path d="M19 18l9 6-9 6z" fill="currentColor" stroke="none" />
        <path d="M31.500 20v9" strokeWidth="2" />
      </svg>
      <div className="pb-1 font-['Noto_Sans_CJK_SC',sans-serif]">
        <p className="text-4xl leading-[36px] font-bold">溜溜自学</p>
        <p className="font-['Lato'] text-[19px] leading-5">zixue.3D66.COM</p>
      </div>
    </aside>
  );
}

export default function App() {
  return (
    <div className="relative flex h-screen flex-col overflow-hidden border-x border-[#35525c] bg-[#646464] font-['Liberation_Sans','Noto_Sans_CJK_SC',sans-serif]">
      <Header />
      <FileTabs />
      <Toolbars />
      <Workspace />
      <CommandLine />
      <StatusBar />
      <Callout />
      <Brand />
    </div>
  );
}
